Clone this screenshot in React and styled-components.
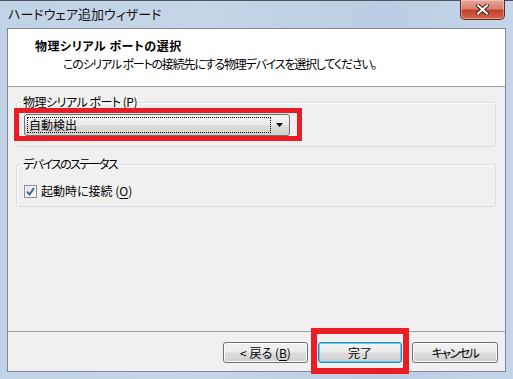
import React from 'react';
import styled, { createGlobalStyle } from 'styled-components';

const GlobalStyle = createGlobalStyle`
    html, body {
        margin: 0;
        padding: 0;
        width: 513px;
        height: 379px;
        overflow: hidden;
    }
    body {
        font-family: "Noto Sans CJK JP", "Noto Sans", sans-serif;
        font-size: 12px;
        font-feature-settings: "palt";
        color: #000;
    }
`;

const Frame = styled.div`
    box-sizing: border-box;
    width: 513px;
    height: 379px;
    display: flex;
    flex-direction: column;
    padding: 0 7px 7px 7px;
    border-top: 1px solid #4e5560;
    background: linear-gradient(90deg, #c3d3e7 0%, #c6d5e8 40%, #bccde3 75%, #c5d5e9 100%);
`;

const TitleBar = styled.div`
    height: 27px;
    display: flex;
    align-items: flex-start;
    justify-content: space-between;
`;

const Caption = styled.span`
    margin: 5px 0 0 1px;
    font-size: 13px;
    line-height: 16px;
    color: #111;
`;

const CloseButton = styled.div`
    box-sizing: border-box;
    width: 45px;
    height: 20px;
    margin-right: 1px;
    margin-top: -1px;
    display: flex;
    align-items: center;
    justify-content: center;
    border: 1px solid #5a2a24;
    border-top: none;
    border-radius: 0 0 5px 5px;
    background: linear-gradient(180deg, #e7a89c 0%, #d7816f 45%, #c4412b 55%, #d2654c 100%);
    box-shadow: inset 0 0 0 1px rgba(255, 220, 210, 0.45);
`;

const Client = styled.div`
    flex: 1;
    display: flex;
    flex-direction: column;
    border: 1px solid #7d8898;
    background: #f0f0f0;
`;

const Header = styled.div`
    box-sizing: border-box;
    height: 58px;
    border-bottom: 1px solid #a0a0a0;
    background: #fff;
    padding: 9px 0 0 27px;
`;

const HeaderTitle = styled.div`
    font-weight: 700;
    line-height: 15px;
    letter-spacing: 0.5px;
`;

const HeaderText = styled.div`
    margin: 3px 0 0 28px;
    line-height: 15px;
    letter-spacing: -1.2px;
`;

const Body = styled.div`
    flex: 1;
    display: flex;
    flex-direction: column;
    gap: 10px;
    padding: 8px 9px 0 8px;
`;

const Group = styled.fieldset`
    margin: 0;
    border: 1px solid #d5dfe5;
    border-radius: 3px;
    padding: ${(p) => p.$pad};
    box-shadow: inset 1px 1px 0 #fff;
`;

const Legend = styled.legend`
    padding: 0 1px;
    margin-left: -2px;
    line-height: 14px;
    letter-spacing: ${(p) => p.$ls || 0}px;
`;

const Key = styled.span`
    text-decoration: ${(p) => (p.$u ? 'underline' : 'none')};
    text-underline-offset: 2px;
`;

const Marked = styled.div`
    position: relative;
    display: inline-block;
    &::after {
        content: '';
        position: absolute;
        inset: ${(p) => p.$inset};
        border: ${(p) => p.$w} solid #ec1c24;
        pointer-events: none;
    }
`;

const Combo = styled.div`
    box-sizing: border-box;
    width: 266px;
    height: 22px;
    display: flex;
    align-items: center;
    padding: 2px;
    border: 1px solid #707070;
    border-radius: 3px;
    background: linear-gradient(180deg, #f4f4f4 0%, #ebebeb 48%, #dddddd 52%, #d0d0d0 100%);
`;

const ComboValue = styled.div`
    flex: 1;
    height: 100%;
    box-sizing: border-box;
    display: flex;
    align-items: center;
    padding-left: 1px;
    border: 1px dotted #000;
    line-height: 14px;
`;

const ComboArrow = styled.div`
    width: 16px;
    display: flex;
    justify-content: center;
`;

const CheckRow = styled.label`
    display: flex;
    align-items: center;
    gap: 4px;
    line-height: 14px;
`;

const CheckBox = styled.span`
    box-sizing: border-box;
    width: 13px;
    height: 13px;
    display: flex;
    align-items: center;
    justify-content: center;
    border: 1px solid #8e8f8f;
    background: linear-gradient(135deg, #e3e3e3 0%, #f8f8f8 100%);
    box-shadow: inset 0 0 0 1px #f4f4f4;
`;

const Footer = styled.div`
    box-sizing: border-box;
    height: 40px;
    border-top: 1px solid #a0a0a0;
    display: flex;
    justify-content: flex-end;
    align-items: flex-start;
    gap: 10px;
    padding: 10px 7px 0 0;
`;

const Button = styled.button`
    box-sizing: border-box;
    width: ${(p) => p.$w}px;
    height: 21px;
    padding: 0;
    margin: 0;
    font: inherit;
    color: #000;
    line-height: 14px;
    letter-spacing: ${(p) => p.$ls || 0}px;
    border: 1px solid ${(p) => (p.$default ? '#3c7fb1' : '#707070')};
    border-radius: 3px;
    background: linear-gradient(180deg, #f2f2f2 0%, #ebebeb 48%, #dddddd 52%, #cfcfcf 100%);
    box-shadow: inset 0 0 0 1px ${(p) => (p.$default ? '#48d8fb' : '#fcfcfc')};
`;

export default function App() {
    return (
        <>
            <GlobalStyle />
            <Frame>
                <TitleBar>
                    <Caption>ハードウェア追加ウィザード</Caption>
                    <CloseButton>
                        <svg width="13" height="11" viewBox="0 0 13 11">
                            <path d="M2 1.5 L11 9.5 M11 1.5 L2 9.5" stroke="#4a1d17" strokeWidth="4" strokeLinecap="square" />
                            <path d="M2 1.5 L11 9.5 M11 1.5 L2 9.5" stroke="#fff" strokeWidth="2" strokeLinecap="square" />
                        </svg>
                    </CloseButton>
                </TitleBar>
                <Client>
                    <Header>
                        <HeaderTitle>物理シリアル ポートの選択</HeaderTitle>
                        <HeaderText>このシリアル ポートの接続先にする物理デバイスを選択してください。</HeaderText>
                    </Header>
                    <Body>
                        <Group $pad="5px 9px 10px 7px">
                            <Legend $ls={-0.5}>物理シリアル ポート (P)</Legend>
                            <Marked $inset="-6px -12px -5px -10px" $w="5px">
                                <Combo>
                                    <ComboValue>自動検出</ComboValue>
                                    <ComboArrow>
                                        <svg width="7" height="4" viewBox="0 0 7 4">
                                            <path d="M0 0 H7 L3.5 4 Z" fill="#000" />
                                        </svg>
                                    </ComboArrow>
                                </Combo>
                            </Marked>
                        </Group>
                        <Group $pad="13px 9px 8px 7px">
                            <Legend $ls={-1.6}>デバイスのステータス</Legend>
                            <CheckRow>
                                <CheckBox>
                                    <svg width="9" height="9" viewBox="0 0 9 9">
                                        <path d="M1 4.5 L3.5 7.5 L8 1" fill="none" stroke="#3b5b95" strokeWidth="1.8" />
                                    </svg>
                                </CheckBox>
                                <span>起動時に接続 (<Key $u>O</Key>)</span>
                            </CheckRow>
                        </Group>
                    </Body>
                    <Footer>
                        <Button $w={85}>&lt; 戻る (<Key $u>B</Key>)</Button>
                        <Marked $inset="-14px -7px -11px -7px" $w="6px">
                            <Button $w={84} $default>完了</Button>
                        </Marked>
                        <Button $w={86} $ls={-1.5}>キャンセル</Button>
                    </Footer>
                </Client>
            </Frame>
        </>
    );
}
